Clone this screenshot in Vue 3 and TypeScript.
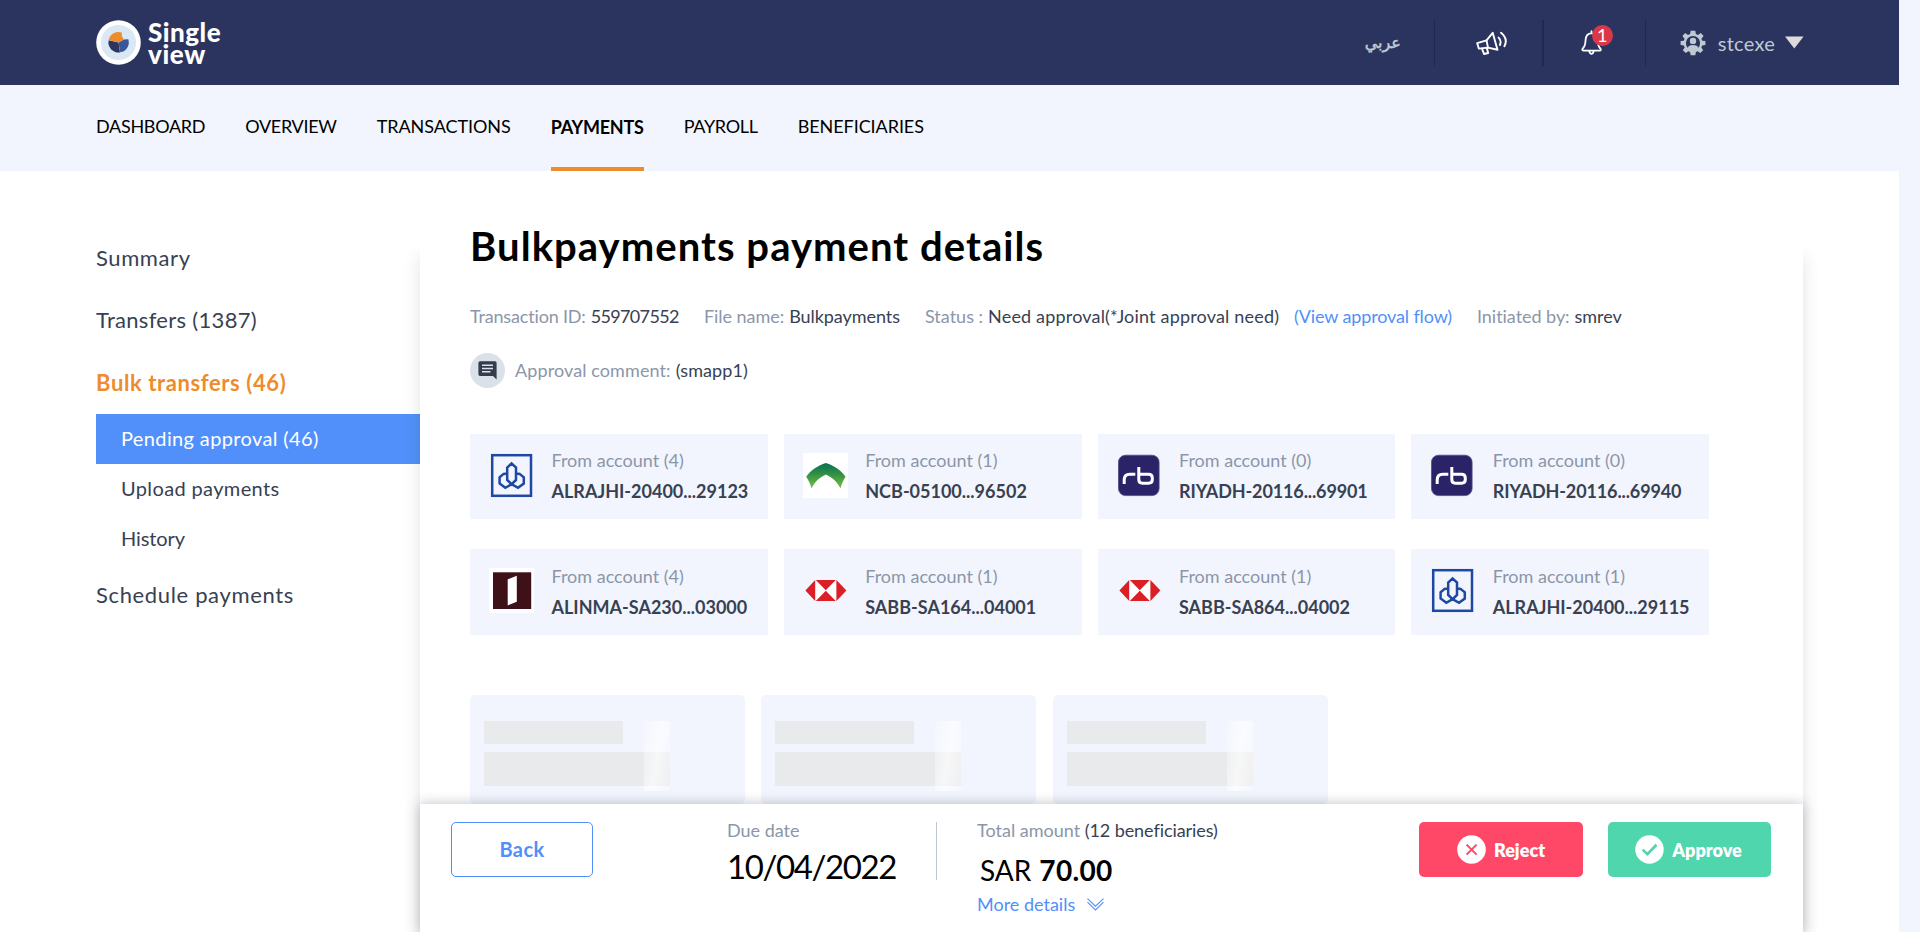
<script setup lang="ts">
type Bank = 'alrajhi' | 'ncb' | 'riyadh' | 'alinma' | 'sabb'

interface Account {
  bank: Bank
  count: number
  name: string
}

interface NavItem {
  label: string
  fit: string
  active?: boolean
}

const navItems: NavItem[] = [
  { label: 'DASHBOARD', fit: 'tight' },
  { label: 'OVERVIEW', fit: 'tight' },
  { label: 'TRANSACTIONS', fit: 'regular' },
  { label: 'PAYMENTS', fit: 'snug', active: true },
  { label: 'PAYROLL', fit: 'tight' },
  { label: 'BENEFICIARIES', fit: 'regular' },
]

const subItems = [
  { label: 'Pending approval (46)', active: true },
  { label: 'Upload payments', active: false },
  { label: 'History', active: false },
]

const accounts: Account[] = [
  { bank: 'alrajhi', count: 4, name: 'ALRAJHI-20400...29123' },
  { bank: 'ncb', count: 1, name: 'NCB-05100...96502' },
  { bank: 'riyadh', count: 0, name: 'RIYADH-20116...69901' },
  { bank: 'riyadh', count: 0, name: 'RIYADH-20116...69940' },
  { bank: 'alinma', count: 4, name: 'ALINMA-SA230...03000' },
  { bank: 'sabb', count: 1, name: 'SABB-SA164...04001' },
  { bank: 'sabb', count: 1, name: 'SABB-SA864...04002' },
  { bank: 'alrajhi', count: 1, name: 'ALRAJHI-20400...29115' },
]
</script>

<template>
  <div class="page">
    <header class="topbar">
      <div class="logo">
        <svg class="logo-mark" viewBox="0 0 45 45">
          <circle cx="22.5" cy="22.5" r="22.3" fill="#fff" />
          <circle cx="22.5" cy="22.5" r="17.6" fill="#dae7f4" />
          <path d="M22.5 22.5 12.7 20.2A10 10 0 0 0 24 32.4Z" fill="#2c3560" />
          <path d="M22.5 22.5 24.2 32.3A10 10 0 0 0 32.3 19.3L28 19.4Z" fill="#3b5599" />
          <path d="M22.5 22.5 12.7 20A10 10 0 0 1 25.8 12.6L25.8 16 28 19.4Z" fill="#ee8c2d" />
        </svg>
        <div class="logo-text"><span>Single</span><span class="second">view</span></div>
      </div>
      <div class="tools">
        <div class="tool lang"><span lang="ar" dir="rtl">عربي</span></div>
        <div class="tool news">
          <svg width="32" height="24" viewBox="0 0 32 24" fill="none" stroke="#fff" stroke-width="1.9" stroke-linejoin="round" stroke-linecap="round">
            <path d="M1.2 12.2 10.5 9.4 16.7 1.8 21.5 18.8 12 16.6 2.8 17.6Z" />
            <path d="M10.5 9.4 12 16.6M6 17.6 8 23 12.2 22 10.8 17" />
            <path d="M22.6 6.6Q25.8 9.6 23.9 14M25 1.8Q32.4 7.8 28.4 15.2" />
          </svg>
        </div>
        <div class="tool bell">
          <svg width="22" height="25" viewBox="0 0 22 25" fill="none" stroke="#fff" stroke-width="1.8" stroke-linejoin="round" stroke-linecap="round">
            <path d="M10.5 1.2V3M10.5 3.4C6.2 3.4 4.8 6.6 4.6 10 4.4 14 4 16.4 1.8 18.4 1 19.4 1.2 20.7 2.4 20.7H18.6C20 20.7 20.2 19.4 19.4 18.6 17.2 16.4 16.6 14 16.4 10 16.2 6.6 14.8 3.4 10.5 3.4Z" />
            <path d="M8.4 21.4Q8.8 23.8 10.5 23.8T12.6 21.4" />
          </svg>
          <span class="badge">1</span>
        </div>
        <div class="tool user">
          <svg width="26" height="26" viewBox="0 0 26 26">
            <path fill="#c0c9d2" fill-rule="evenodd" d="M10.7.8H15.3L15.9 4 18 4.9 20.8 3.1 23.6 6 21.4 8.8 22.2 10.7 25.4 11.1V15.1L22.2 15.6 21.3 17.6 23.2 20.3 20.2 23 17.7 21.3 15.9 22.1 15.3 25.3H10.7L10.1 22.1 8.3 21.3 5.8 23 2.8 20.3 4.7 17.6 3.8 15.6.6 15.1V11.1L3.8 10.7 4.6 8.8 2.4 6 5.2 3.1 8 4.9 10.1 4ZM13 5.9A7.1 7.1 0 1 0 13 20.1 7.1 7.1 0 0 0 13 5.9Z" />
            <circle cx="13" cy="10.9" r="3.2" fill="#c0c9d2" />
            <path d="M7.8 20V18Q8.3 14.9 13 14.9T18.2 18V20Q13 22.5 7.8 20Z" fill="#c0c9d2" />
          </svg>
          <span class="username">stcexe</span>
          <svg class="caret" width="19" height="13" viewBox="0 0 19 13"><path d="M0 .4H18.6L9.3 12.6Z" fill="#dcdcdc" /></svg>
        </div>
      </div>
    </header>

    <nav class="mainnav">
      <a v-for="item in navItems" :key="item.label" :class="[item.fit, { active: item.active }]">{{ item.label }}</a>
    </nav>

    <div class="body">
      <aside class="sidebar">
        <a class="entry">Summary</a>
        <a class="entry numbers">Transfers (1387)</a>
        <a class="entry current">Bulk transfers (46)</a>
        <a v-for="sub in subItems" :key="sub.label" class="sub" :class="{ active: sub.active }">{{ sub.label }}</a>
        <a class="entry last">Schedule payments</a>
      </aside>

      <main class="panel">
        <h1>Bulkpayments payment details</h1>

        <div class="facts">
          <div class="fact id"><span>Transaction ID:</span><b>559707552</b></div>
          <div class="fact file"><span>File name:</span><b>Bulkpayments</b></div>
          <div class="fact status"><span>Status :</span><b>Need approval(*Joint approval need)</b></div>
          <a class="flow">(View approval flow)</a>
          <div class="fact by"><span>Initiated by:</span><b>smrev</b></div>
        </div>

        <div class="comment">
          <span class="bubble">
            <svg width="19" height="19" viewBox="0 0 19 19">
              <path d="M2 .3H17Q18.6.3 18.6 2V18.6L15 15H2Q.4 15 .4 13.3V2Q.4.3 2 .3Z" fill="#343c4d" />
              <path d="M4 4.2H15M4 7.5H15M4 10.8H12.5" stroke="#dbe1e9" stroke-width="1.5" />
            </svg>
          </span>
          <div class="fact"><span>Approval comment:</span><b>(smapp1)</b></div>
        </div>

        <div class="accounts">
          <div v-for="acc in accounts" :key="acc.name" class="account">
            <svg class="bank" viewBox="0 0 45 45">
              <g v-if="acc.bank === 'alrajhi'" fill="none" stroke="#1d48a4">
                <rect x="3.2" y="2.2" width="38.8" height="40.6" stroke-width="2.5" />
                <path d="M18.2 27V14.6L22.6 10.4 27 14.6V27L22.6 31.2ZM18.2 20.5 14.6 20.9 10.6 24.3V30.5L16.3 34.8 22.6 31.2M27 20.5 30.6 20.9 34.8 24.3V30.5L29 34.8 22.6 31.2" stroke-width="2.5" />
              </g>
              <g v-else-if="acc.bank === 'ncb'">
                <rect width="45" height="45" fill="#fff" />
                <path d="M3.2 23.8C8.2 17 14.8 12.6 22.9 10.1 31 12.6 37.6 17 42.6 23.8 40.3 27.2 38.5 31.2 37.5 35.6 34.3 28.8 29.2 24.3 22.9 21.5 16.6 24.3 11.5 28.8 8.5 35.6 7.4 31.2 5.6 27.2 3.2 23.8Z" fill="url(#ncb-green)" />
              </g>
              <g v-else-if="acc.bank === 'riyadh'">
                <rect x="1.5" y="2.2" width="40.6" height="40.4" rx="7" fill="#2b2368" stroke="#534b88" stroke-width=".8" />
                <path d="M7.2 31V27Q7.2 21.3 12.8 21.3H18.3M21.8 14V26.5Q21.8 30.2 25.5 30.2H31.5Q35.3 30.2 35.3 26.5V25Q35.3 21.3 31.5 21.3H21.8" fill="none" stroke="#fff" stroke-width="3" />
              </g>
              <g v-else-if="acc.bank === 'alinma'">
                <rect width="45" height="45" fill="#fff" />
                <rect x="4" y="4.3" width="38.2" height="36.7" fill="#3e1118" />
                <path d="M18.7 11.3 27.8 7.8V33.8L18.7 37.4Z" fill="#fff" />
              </g>
              <g v-else>
                <path d="M12.3 12H33.3V33H12.3Z" fill="#fff" />
                <path d="M12.8 12H32.8L22.8 22.3ZM12.8 33H32.8L22.8 22.7ZM12.2 12V33L2.4 22.5ZM33.4 12V33L43.4 22.5Z" fill="#db1f26" />
              </g>
            </svg>
            <div class="lines">
              <span class="from">From account ({{ acc.count }})</span>
              <span class="number" :class="acc.bank">{{ acc.name }}</span>
            </div>
          </div>
        </div>

        <div class="skeletons">
          <div v-for="n in 3" :key="n" class="skeleton">
            <div class="bar short"></div>
            <div class="bar long"></div>
            <div class="shine"></div>
          </div>
        </div>
      </main>
    </div>

    <footer class="actions">
      <button class="back">Back</button>
      <div class="due">
        <span class="caption">Due date</span>
        <span class="date">10/04/2022</span>
      </div>
      <div class="total">
        <span class="caption">Total amount <em>(12 beneficiaries)</em></span>
        <span class="sum"><span>SAR</span><b>70.00</b></span>
        <a class="more">More details
          <svg width="17" height="13" viewBox="0 0 17 13" fill="none" stroke="#5190fa" stroke-width="1.1"><path d="M.5.6 8.5 8.2 16.5.6M.5 4.2 8.5 12 16.5 4.2" /></svg>
        </a>
      </div>
      <div class="decisions">
        <button class="reject">
          <svg width="29" height="29" viewBox="0 0 29 29"><circle cx="14.5" cy="14.5" r="14.3" fill="#fff" /><path d="M9.6 9.6 19.6 19.6M19.6 9.6 9.6 19.6" stroke="#ff4868" stroke-width="2" /></svg>
          Reject
        </button>
        <button class="approve">
          <svg width="29" height="29" viewBox="0 0 29 29"><circle cx="14.5" cy="14.5" r="14.2" fill="#fff" /><path d="M7.6 14.6 12.4 19.2 21.5 9.8" fill="none" stroke="#4fd6ac" stroke-width="2.7" /></svg>
          Approve
        </button>
      </div>
    </footer>

    <svg class="defs" width="0" height="0">
      <defs>
        <linearGradient id="ncb-green" x1="0" y1="10" x2="0" y2="36" gradientUnits="userSpaceOnUse">
          <stop offset="0" stop-color="#067152" />
          <stop offset=".4" stop-color="#2f8d45" />
          <stop offset="1" stop-color="#7cc242" />
        </linearGradient>
      </defs>
    </svg>
  </div>
</template>

<style>
body {
  margin: 0;
  background: #f2f5fd;
  overflow: hidden;
}
</style>

<style scoped>
.page {
  position: relative;
  box-sizing: border-box;
  width: 1899px;
  height: 932px;
  overflow: hidden;
  background: #fff;
  font-family: Lato, "Liberation Sans", sans-serif;
  color: #384152;
}

.topbar {
  display: flex;
  justify-content: space-between;
  height: 85px;
  padding: 0 95px 0 96px;
  background: #2b345f;
}

.logo {
  display: flex;
  gap: 7px;
  padding-top: 20px;
  color: #fff;
}

.logo-mark {
  width: 45px;
  height: 45px;
}

.logo-text {
  display: flex;
  flex-direction: column;
  padding-top: 1px;
  font-size: 26px;
  font-weight: 900;
  line-height: 22px;
  letter-spacing: 0.5px;
}

.second {
  letter-spacing: 0.6px;
}

.tools {
  display: flex;
  align-items: center;
}

.tool {
  display: flex;
  align-items: center;
  height: 46px;
  box-sizing: border-box;
}

.lang {
  justify-content: flex-end;
  width: 71px;
  padding-right: 33px;
  border-right: 1px solid #1f2850;
  font-family: "DejaVu Sans", sans-serif;
  font-size: 16px;
  color: #c0c9d2;
  -webkit-text-stroke: 0.5px #c0c9d2;
}

.news {
  width: 109px;
  padding-left: 41px;
  border-right: 2px solid #1f2850;
}

.bell {
  position: relative;
  width: 102px;
  padding-left: 37px;
  border-right: 1px solid #1f2850;
}

.badge {
  position: absolute;
  left: 48px;
  top: 5px;
  width: 21px;
  height: 21px;
  border-radius: 50%;
  background: #db3749;
  color: #fff;
  font-size: 18px;
  line-height: 21px;
  text-align: center;
}

.user {
  padding-left: 34px;
}

.username {
  margin-left: 12px;
  font-size: 20px;
  line-height: 22px;
  letter-spacing: 0.25px;
  color: #c0c9d2;
}

.caret {
  margin-left: 10px;
}

.mainnav {
  display: flex;
  gap: 40px;
  height: 86px;
  padding-left: 96px;
  background: #f2f5fd;
  color: #000;
}

.mainnav a {
  font-size: 18px;
  line-height: 82px;
}

.mainnav .tight {
  letter-spacing: -0.3px;
}

.mainnav .regular {
  letter-spacing: -0.07px;
}

.mainnav .snug {
  letter-spacing: -0.24px;
}

.mainnav .active {
  box-sizing: border-box;
  height: 86px;
  border-bottom: 4px solid #ee8c2d;
  font-weight: 700;
  line-height: 85px;
}

.body {
  display: flex;
  height: 761px;
  padding-left: 96px;
}

.sidebar {
  display: flex;
  flex-direction: column;
  width: 324px;
  padding-top: 55px;
}

.entry {
  height: 62.5px;
  font-size: 22px;
  line-height: 64px;
  letter-spacing: 0.6px;
}

.numbers {
  letter-spacing: 0.31px;
  line-height: 62.5px;
}

.current {
  color: #ee8c2d;
  font-weight: 700;
}

.sub {
  height: 50px;
  padding-left: 25px;
  font-size: 20px;
  line-height: 49px;
  letter-spacing: 0.37px;
}

.sub:not(.active) + .sub {
  letter-spacing: -0.1px;
}

.sub.active {
  background: #5190fa;
  color: #fff;
}

.entry.last {
  line-height: 61px;
  letter-spacing: 0.65px;
}

.panel {
  box-sizing: border-box;
  width: 1383px;
  margin-top: 50px;
  padding-left: 50px;
  background: #fff;
  box-shadow: 0 36px 16px rgba(50, 60, 80, 0.15);
}

h1 {
  height: 48px;
  margin: 0;
  font-size: 40px;
  font-weight: 700;
  line-height: 50px;
  letter-spacing: 1.05px;
  color: #000;
}

.facts {
  display: flex;
  height: 24px;
  margin-top: 35px;
  font-size: 18px;
  line-height: 24px;
}

.fact {
  display: flex;
  gap: 5px;
  color: #8b96a9;
}

.fact b {
  font-weight: 400;
  color: #384152;
}

.id {
  width: 234px;
  letter-spacing: -0.17px;
}

.id b {
  letter-spacing: -0.66px;
}

.file {
  width: 221px;
  letter-spacing: -0.05px;
}

.status {
  width: 369px;
}

.status b {
  letter-spacing: 0.18px;
}

.flow {
  width: 183px;
  letter-spacing: -0.13px;
  color: #5190fa;
}

.by {
  letter-spacing: -0.04px;
}

.comment {
  display: flex;
  align-items: center;
  gap: 10px;
  height: 35px;
  margin-top: 25px;
  font-size: 18px;
  line-height: 21px;
  letter-spacing: 0.1px;
}

.comment .fact {
  padding-bottom: 1px;
}

.bubble {
  display: flex;
  align-items: center;
  justify-content: center;
  width: 35px;
  height: 35px;
  border-radius: 50%;
  background: #dbe1e9;
}

.accounts {
  display: grid;
  grid-template-columns: repeat(4, 1fr);
  grid-template-rows: 85px 86px;
  gap: 30px 16px;
  width: 1239px;
  margin-top: 46px;
}

.account {
  display: flex;
  box-sizing: border-box;
  padding: 19px 0 0 19px;
  background: #f2f5fd;
}

.bank {
  width: 45px;
  height: 45px;
  flex: none;
}

.lines {
  display: flex;
  flex-direction: column;
  gap: 7px;
  margin: -5px 0 0 17.5px;
  font-size: 18px;
  line-height: 24px;
}

.account:nth-child(n + 5) .lines {
  margin-top: -4px;
}

.from {
  color: #8b96a9;
}

.number {
  font-weight: 700;
  white-space: nowrap;
}

.number.riyadh {
  letter-spacing: -0.13px;
}

.skeletons {
  display: flex;
  gap: 16.5px;
  margin-top: 60px;
}

.skeleton {
  position: relative;
  box-sizing: border-box;
  width: 275px;
  height: 109px;
  padding: 26px 14px 0;
  border-radius: 5px;
  background: #f2f5fd;
}

.skeleton + .skeleton {
  left: -0.5px;
}

.bar {
  background: #e9eaec;
}

.short {
  width: 139px;
  height: 23px;
}

.long {
  width: 186px;
  height: 34px;
  margin-top: 8px;
}

.shine {
  position: absolute;
  left: 174px;
  top: 26px;
  width: 26px;
  height: 70px;
  background: linear-gradient(98deg, rgba(255, 255, 255, 0.2), rgba(255, 255, 255, 0.62) 50%, rgba(255, 255, 255, 0.25));
}

.actions {
  position: absolute;
  left: 420px;
  top: 804px;
  display: flex;
  box-sizing: border-box;
  width: 1383px;
  height: 128px;
  padding: 18px 32px 0 31px;
  background: #fff;
  box-shadow: 0 0 12px rgba(50, 60, 75, 0.32);
}

button {
  display: flex;
  align-items: center;
  justify-content: center;
  box-sizing: border-box;
  height: 55px;
  padding: 0;
  border: 0;
  border-radius: 5px;
  color: #fff;
  font-family: inherit;
  font-size: 18px;
  font-weight: 800;
}

.back {
  width: 142px;
  padding-bottom: 1px;
  border: 1px solid #5190fa;
  background: #fff;
  color: #5190fa;
  font-size: 20px;
  font-weight: 700;
  letter-spacing: 0.38px;
}

.due {
  display: flex;
  flex-direction: column;
  box-sizing: border-box;
  width: 210px;
  height: 58px;
  margin-left: 134px;
  border-right: 1px solid #bcc6d0;
}

.caption {
  height: 16px;
  font-size: 18px;
  line-height: 16px;
  color: #8b96a9;
}

.caption em {
  font-style: normal;
  letter-spacing: -0.08px;
  color: #384152;
}

.date {
  margin-top: 8px;
  font-size: 33px;
  line-height: 41px;
  letter-spacing: -1.4px;
  color: #000;
}

.total {
  display: flex;
  flex-direction: column;
  width: 260px;
  margin-left: 40px;
}

.sum {
  display: flex;
  gap: 8px;
  margin: 14px 0 0 3px;
  font-size: 28px;
  line-height: 36px;
  color: #000;
}

.sum b {
  letter-spacing: 0.35px;
}

.more {
  display: flex;
  align-items: center;
  gap: 12px;
  margin-top: 4px;
  font-size: 18px;
  line-height: 24px;
  color: #5190fa;
}

.decisions {
  display: flex;
  gap: 25px;
  margin-left: auto;
}

.reject {
  width: 164px;
  gap: 8px;
  background: #ff4868;
}

.approve {
  width: 163px;
  gap: 8px;
  padding-right: 2px;
  background: #4fd6ac;
}

.defs {
  position: absolute;
}
</style>
